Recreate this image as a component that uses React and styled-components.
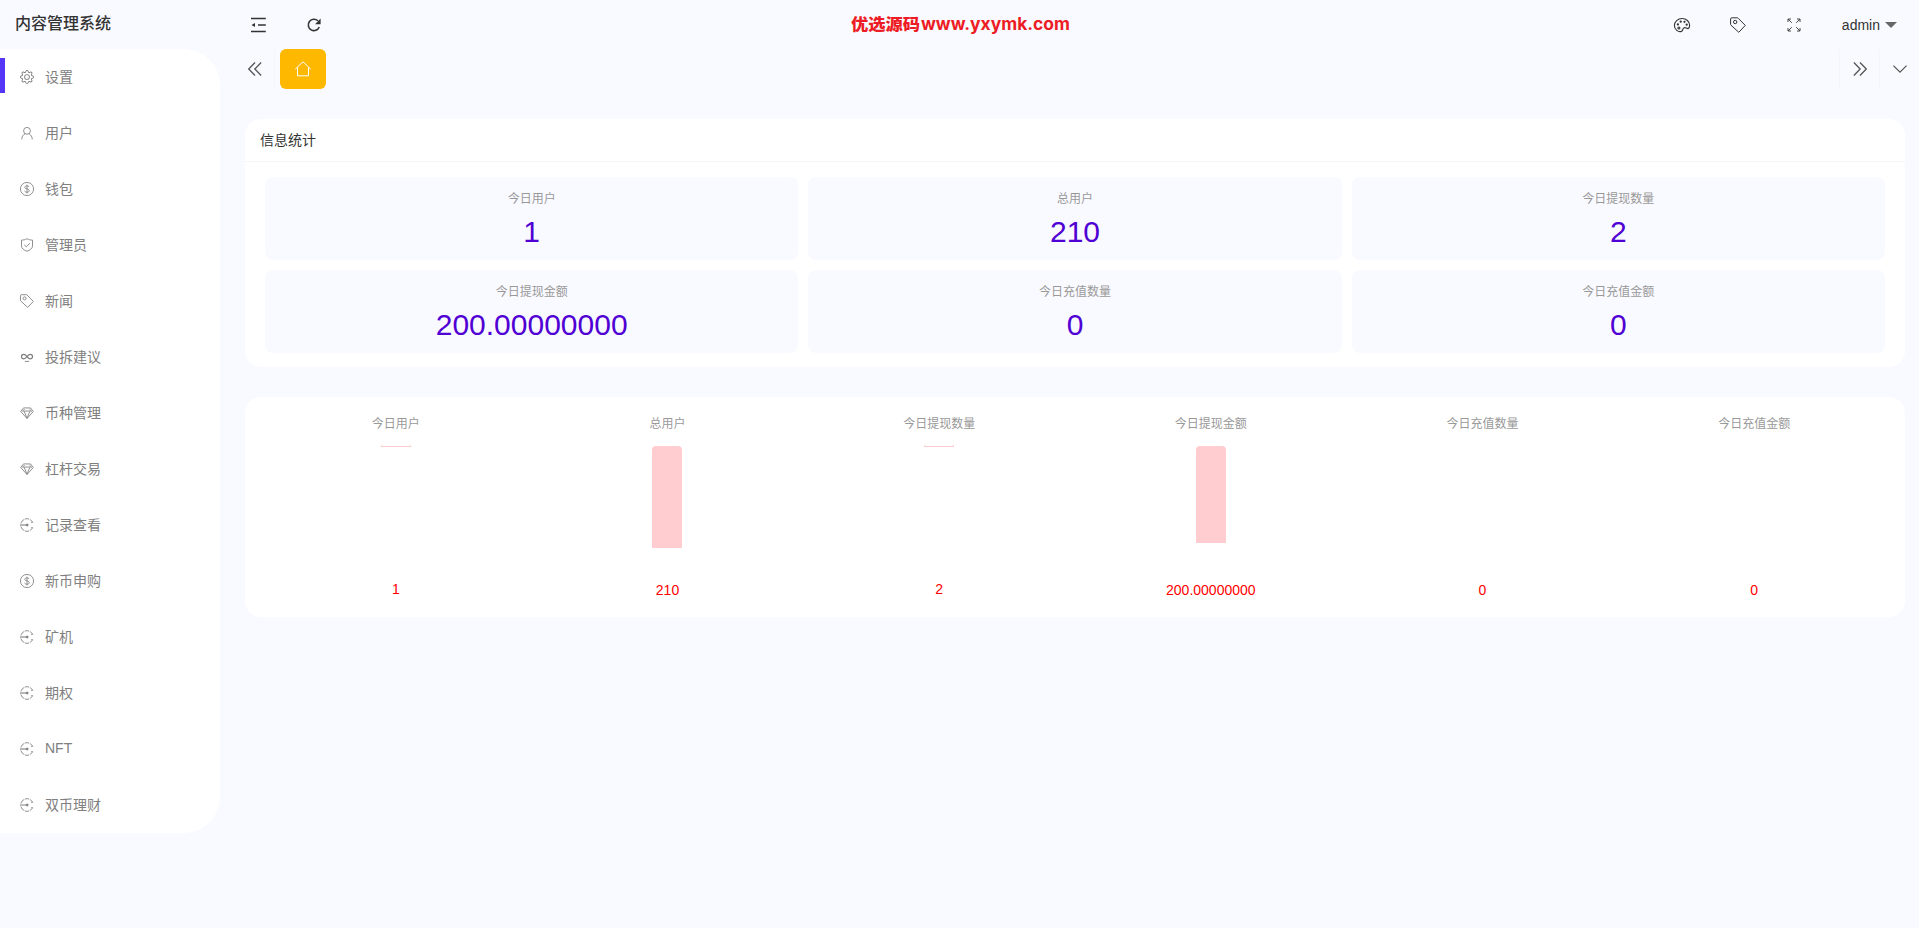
import React from 'react'
import styled, { createGlobalStyle } from 'styled-components'
import { BsGear } from 'react-icons/bs'

const GlobalStyle = createGlobalStyle`
  * {
    box-sizing: border-box;
  }

  body {
    margin: 0;
    background: #f9faff;
    color: #333;
    font-family: "Liberation Sans", "Noto Sans CJK SC", sans-serif;
    font-size: 14px;
  }
`

const Layout = styled.div`
  display: flex;
  align-items: flex-start;
  height: 928px;
  overflow: hidden;
`

const Side = styled.aside`
  width: 220px;
  flex: none;
`

const Logo = styled.div`
  height: 49px;
  padding-left: 15px;
  line-height: 47px;
  font-size: 16px;
  font-weight: 500;
`

const Menu = styled.ul`
  margin: 0;
  padding: 0;
  list-style: none;
  background: #fff;
  border-radius: 0 36px 36px 0;
  overflow: hidden;
`

const MenuItem = styled.li`
  display: flex;
  align-items: center;
  height: 56px;
  padding-bottom: 3px;
  color: #808080;

  &::before {
    content: '';
    width: 5px;
    height: 35px;
    background: ${({ $active }) => ($active ? '#5536f7' : 'transparent')};
  }

  svg {
    margin: 3px 11px 0 15px;
  }
`

const Main = styled.div`
  flex: 1;
  min-width: 0;
`

const Header = styled.header`
  display: flex;
  align-items: center;
  height: 49px;
`

const HeaderLeft = styled.div`
  display: flex;
  align-items: center;
  width: 631px;
  padding-left: 10px;
`

const HeaderRight = styled.div`
  display: flex;
  flex: 1;
  align-items: center;
  justify-content: flex-end;
  padding-right: 22px;
`

const HeaderButton = styled.div`
  display: flex;
  justify-content: center;
  width: 56px;
`

const User = styled.div`
  display: flex;
  align-items: center;
  gap: 5px;
  padding-left: 20px;
`

const Caret = styled.i`
  border: 6px solid transparent;
  border-top-color: #666;
  border-bottom: 0;
`

const Brand = styled.div`
  display: flex;
  align-items: center;
  height: 46px;
  color: #ed1c24;
`

const TabBar = styled.div`
  display: flex;
  height: 40px;
  padding-left: 15px;
  color: #555;
`

const TabControl = styled.div`
  display: flex;
  align-items: center;
  justify-content: center;
  width: 40px;
  border-left: ${({ $left }) => ($left ? '1px solid #f4f5f9' : '0')};
  border-right: ${({ $right }) => ($right ? '1px solid #f4f5f9' : '0')};
`

const HomeTab = styled.div`
  display: flex;
  align-items: center;
  justify-content: center;
  width: 46px;
  margin: 0 auto 0 5px;
  border-radius: 6px;
  background: #ffb800;
  color: #fff;
`

const Content = styled.main`
  display: flex;
  flex-direction: column;
  gap: 30px;
  padding: 30px 14px 0 25px;
`

const Panel = styled.section`
  background: #fff;
  border-radius: 16px;
`

const PanelTitle = styled.div`
  height: 43px;
  padding-left: 15px;
  line-height: 42px;
  border-bottom: 1px solid #f6f6f6;
`

const StatGrid = styled.div`
  display: grid;
  grid-template-columns: repeat(3, 1fr);
  gap: 10px;
  padding: 15px 20px 14px;
`

const Stat = styled.div`
  height: 83px;
  padding-top: 13px;
  border-radius: 8px;
  background: #f9faff;
  text-align: center;
`

const Label = styled.div`
  height: 18px;
  line-height: 18px;
  font-size: 12px;
  color: #999;
`

const Value = styled.div`
  margin-top: 6px;
  line-height: 36px;
  font-size: 30px;
  color: #5000d4;
`

const Chart = styled.div`
  display: grid;
  grid-template-columns: repeat(6, 1fr);
  height: 220px;
  padding: 18px 15px 0;
  text-align: center;
`

const BarArea = styled.div`
  height: 134px;
  margin-top: 13px;
`

const Bar = styled.div`
  width: 30px;
  margin: 0 auto;
  border-radius: 4px 4px 0 0;
  background: #ffcdcf;
`

const BarLine = styled.div`
  width: 30px;
  height: 2px;
  margin: -1px auto 0;
  border: solid #ffcdcf;
  border-width: 0 1px 1px;
`

const BarValue = styled.div`
  line-height: 20px;
  color: #f00;
`

const ICONS = {
  user: (
    <>
      <circle cx="8" cy="5.5" r="3.9" />
      <path d="M2 15.4c.1-3.4 1.5-5.5 4-6.6M14 15.4c-.1-3.4-1.5-5.5-4-6.6" />
    </>
  ),
  dollar: (
    <>
      <circle cx="8" cy="8" r="7.5" />
      <path d="M10.4 5.8C10.2 4.9 9.3 4.4 8 4.4c-1.5 0-2.5.7-2.5 1.8 0 2.5 5.1 1 5.1 3.6 0 1.100-1 1.900-2.600 1.900-1.500 0-2.500-.7-2.700-1.700M8 3v10" />
    </>
  ),
  shield: (
    <>
      <path d="M8 .8c2 1.200 4 1.600 6.300 1.600v6.800c0 2.700-3 4.700-6.300 6-3.300-1.300-6.300-3.300-6.300-6V2.400C4 2.400 6 2 8 .8z" />
      <path d="M4.800 7.800l2.400 2.300 4.200-4.300" />
    </>
  ),
  tag: (
    <>
      <path d="M1.800.8h5.400q.5 0 .9.4l7.200 7.200-6.500 6.900L1 8.200q-.4-.4-.4-.9V2q0-1.200 1.200-1.200z" />
      <circle cx="5.200" cy="5" r="1.700" />
    </>
  ),
  link: (
    <>
      <path d="M8 7.500C6.800 5.900 5.600 5.100 4.200 5.100a2.500 2.500 0 1 0 0 5c1.500 0 2.600-1.200 3.800-2.600s2.300-2.400 3.800-2.400a2.500 2.500 0 1 1 0 5C10.400 10.100 9.200 9.100 8 7.500z" strokeWidth="1.4" />
      <path d="M5.500 13h5" />
    </>
  ),
  diamond: (
    <path d="M4 2.200h8l3.200 4L8 14.300.8 6.200zM3 5.800h10M4.800 6.200L8 14l3.200-7.800M2.500 6.200l2.700-2.700M13.500 6.200l-2.700-2.700" />
  ),
  record: (
    <>
      <path d="M1 6.200A7.200 7.200 0 0 1 5 1.500M5.800 1.100a7.200 7.200 0 0 1 4.600.1M11.300 1.700a7.200 7.200 0 0 1 3.200 3.300h-1.700" />
      <path d="M1 9.800a7.200 7.200 0 0 0 4 4.700M5.800 14.900a7.200 7.200 0 0 0 4.600-.1M11.300 14.300a7.200 7.200 0 0 0 3.200-3.300h-1.700" />
      <path d="M0 8h8" strokeWidth="1.3" />
      <circle cx="8.200" cy="8" r="1.100" fill="currentColor" />
    </>
  ),
  indent: (
    <>
      <path d="M1 1.500h14.800M8 8h7.800M1 14.500h14.800" />
      <path d="M5 6v4L1.500 8z" fill="currentColor" stroke="none" />
    </>
  ),
  refresh: (
    <>
      <path d="M14 10.300A6.500 6.500 0 1 1 12.500 3.200" />
      <path d="M15.600.6v6.400H9.200z" fill="currentColor" stroke="none" />
    </>
  ),
  palette: (
    <>
      <path d="M8 1.500c4.300 0 7.600 3.200 7.600 6.600 0 2.300-.6 3.500-1.600 3.500-1.500 0-2.400-1.500-3.900-.9-1.700.6-.9 2.900-2.700 3.700C4.300 15.500.4 12.400.4 8.500.4 4.600 3.900 1.500 8 1.500z" />
      <circle cx="3.900" cy="7.400" r=".6" />
      <circle cx="6.700" cy="4.700" r=".6" />
      <circle cx="10.500" cy="4.800" r=".6" />
      <circle cx="12.700" cy="7.700" r=".6" />
      <circle cx="4.900" cy="11" r="1" />
    </>
  ),
  expand: (
    <path d="M5.800 5.800L2.200 2.200M2 5V2h3M10.200 5.800l3.600-3.600M11 2h3v3M5.800 10.200l-3.600 3.600M2 11v3h3M10.200 10.200l3.600 3.600M11 14h3v-3" />
  ),
  prev: <path d="M8 .5L.8 8 8 15.500M15 .5L7.800 8l7.200 7.500" />,
  next: <path d="M1 .5L8.200 8 1 15.500M8 .5L15.200 8 8 15.500" />,
  down: <path d="M.5 4.200L8 11.700l7.500-7.500" />,
  home: <path d="M.2 8.200L8 .8l7.800 7.400M2.500 6.500v8.300h11V6.500" />,
}

const Icon = ({ name, size = 14, weight = 1 }) => (
  <svg
    width={size}
    height={size}
    viewBox="0 0 16 16"
    fill="none"
    stroke="currentColor"
    strokeWidth={weight}
    overflow="visible"
  >
    {ICONS[name]}
  </svg>
)

const menus = [
  { icon: 'gear', title: '设置' },
  { icon: 'user', title: '用户' },
  { icon: 'dollar', title: '钱包' },
  { icon: 'shield', title: '管理员' },
  { icon: 'tag', title: '新闻' },
  { icon: 'link', title: '投拆建议' },
  { icon: 'diamond', title: '币种管理' },
  { icon: 'diamond', title: '杠杆交易' },
  { icon: 'record', title: '记录查看' },
  { icon: 'dollar', title: '新币申购' },
  { icon: 'record', title: '矿机' },
  { icon: 'record', title: '期权' },
  { icon: 'record', title: 'NFT' },
  { icon: 'record', title: '双币理财' },
]

const stats = [
  { label: '今日用户', value: '1', bar: 1 },
  { label: '总用户', value: '210', bar: 102 },
  { label: '今日提现数量', value: '2', bar: 1 },
  { label: '今日提现金额', value: '200.00000000', bar: 97 },
  { label: '今日充值数量', value: '0', bar: 0 },
  { label: '今日充值金额', value: '0', bar: 0 },
]

const renderBar = (height) => {
  if (height === 0) return null
  if (height === 1) return <BarLine />
  return <Bar style={{ height }} />
}

export default function App() {
  return (
    <>
      <GlobalStyle />
      <Layout>
        <Side>
          <Logo>内容管理系统</Logo>
          <Menu>
            {menus.map((item, i) => (
              <MenuItem key={item.title} $active={i === 0}>
                {item.icon === 'gear' ? <BsGear size={14} /> : <Icon name={item.icon} />}
                {item.title}
              </MenuItem>
            ))}
          </Menu>
        </Side>
        <Main>
          <Header>
            <HeaderLeft>
              <HeaderButton><Icon name="indent" size={16} weight={1.3} /></HeaderButton>
              <HeaderButton><Icon name="refresh" size={14} weight={1.8} /></HeaderButton>
            </HeaderLeft>
            <Brand>
              <svg width="220" height="40" viewBox="0 0 220 40" fill="currentColor" overflow="visible">
                <text x="0" y="25" textLength="69" lengthAdjust="spacingAndGlyphs" fontSize="16" fontWeight="900" fontFamily="Noto Sans CJK SC, sans-serif">优选源码</text>
                <text x="70" y="25" textLength="149" lengthAdjust="spacingAndGlyphs" fontSize="17" fontWeight="700" fontFamily="Inter, sans-serif">www.yxymk.com</text>
              </svg>
            </Brand>
            <HeaderRight>
              <HeaderButton><Icon name="palette" size={16} weight={1.1} /></HeaderButton>
              <HeaderButton><Icon name="tag" size={16} /></HeaderButton>
              <HeaderButton><Icon name="expand" size={16} weight={0.9} /></HeaderButton>
              <User>
                admin
                <Caret />
              </User>
            </HeaderRight>
          </Header>
          <TabBar>
            <TabControl $right><Icon name="prev" size={14} weight={1.5} /></TabControl>
            <HomeTab><Icon name="home" size={16} /></HomeTab>
            <TabControl $left><Icon name="next" size={14} weight={1.5} /></TabControl>
            <TabControl $left><Icon name="down" size={14} weight={1.4} /></TabControl>
          </TabBar>
          <Content>
            <Panel>
              <PanelTitle>信息统计</PanelTitle>
              <StatGrid>
                {stats.map((item) => (
                  <Stat key={item.label}>
                    <Label>{item.label}</Label>
                    <Value>{item.value}</Value>
                  </Stat>
                ))}
              </StatGrid>
            </Panel>
            <Panel>
              <Chart>
                {stats.map((item) => (
                  <div key={item.label}>
                    <Label>{item.label}</Label>
                    <BarArea>{renderBar(item.bar)}</BarArea>
                    <BarValue>{item.value}</BarValue>
                  </div>
                ))}
              </Chart>
            </Panel>
          </Content>
        </Main>
      </Layout>
    </>
  )
}
